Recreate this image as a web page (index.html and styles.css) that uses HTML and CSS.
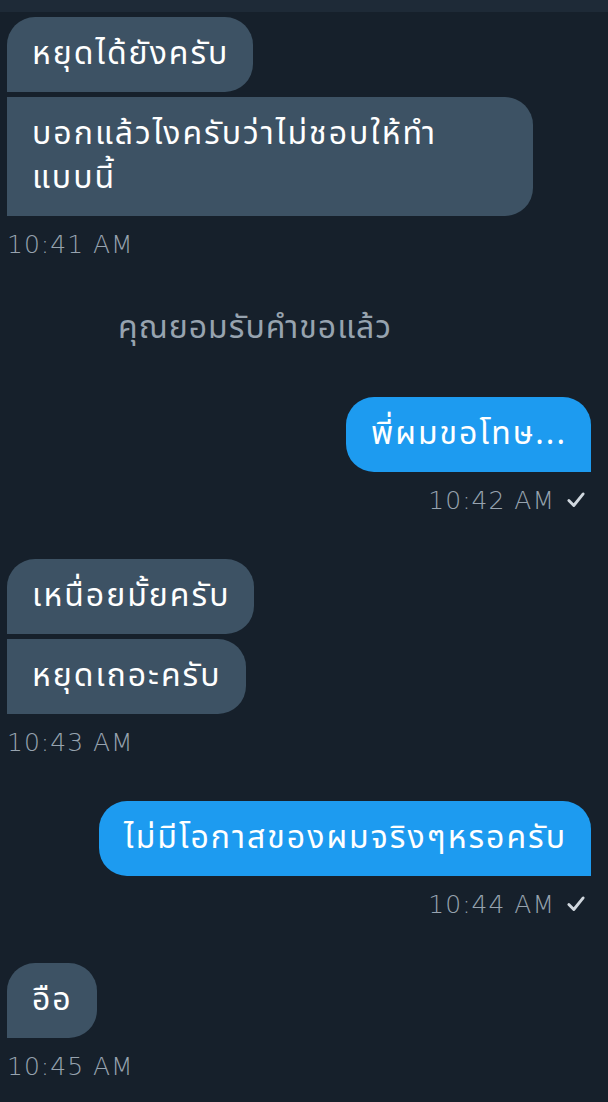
FILE: index.html
```html
<!DOCTYPE html>
<html>
    <head>
        <meta charset="utf-8">
        <meta name="viewport" content="width=device-width,initial-scale=1.0">
        <title>Messages</title>
        <link rel="stylesheet" href="styles.css">
    </head>
    <body>
        <div class="topBar"></div>
        <div class="chat">
            <div class="group">
                <div class="bubble in first">หยุดได้ยังครับ</div>
                <div class="bubble in wide">บอกแล้วไงครับว่าไม่ชอบให้ทำ<br>แบบนี้</div>
                <div class="time">10:41 AM</div>
            </div>

            <div class="system">คุณยอมรับคำขอแล้ว</div>

            <div class="group out">
                <div class="bubble sent">พี่ผมขอโทษ...</div>
                <div class="time">10:42 AM
                    <svg class="check" viewBox="0 0 20 20"><path d="M3.5 10.5 L8 15 L16.5 4.5" /></svg>
                </div>
            </div>

            <div class="group">
                <div class="bubble in first">เหนื่อยมั้ยครับ</div>
                <div class="bubble in">หยุดเถอะครับ</div>
                <div class="time">10:43 AM</div>
            </div>

            <div class="group out">
                <div class="bubble sent">ไม่มีโอกาสของผมจริงๆหรอครับ</div>
                <div class="time">10:44 AM
                    <svg class="check" viewBox="0 0 20 20"><path d="M3.5 10.5 L8 15 L16.5 4.5" /></svg>
                </div>
            </div>

            <div class="group">
                <div class="bubble in first">อือ</div>
                <div class="time">10:45 AM</div>
            </div>
        </div>
    </body>
</html>
```

FILE: styles.css
```css
html, body {
    margin: 0;
    padding: 0;
    background-color: #16202b;
    font-family: "Noto Sans Thai", "Noto Sans", "DejaVu Sans", sans-serif;
    color: #fff;
}

.topBar {
    height: 12px;
    background-color: #1e2a37;
}

.chat {
    display: flex;
    flex-direction: column;
    gap: 44px;
    padding: 5px 17px 0 7px;
}

.group {
    display: flex;
    flex-direction: column;
    align-items: flex-start;
    gap: 5px;
}

.group.out {
    align-items: flex-end;
}

.bubble {
    box-sizing: border-box;
    padding: 15px 24px 16px 25px;
    max-width: 526px;
    font-size: 32px;
    line-height: 44px;
    letter-spacing: 2px;
    border-radius: 28px;
}

.bubble.in {
    background-color: #3d5264;
    border-top-left-radius: 0;
    border-bottom-left-radius: 0;
}

.bubble.in.first {
    border-top-left-radius: 28px;
}

.bubble.wide {
    width: 526px;
}

.bubble.sent {
    background-color: #1d9bf0;
    border-bottom-right-radius: 0;
}

.time {
    display: flex;
    align-items: center;
    gap: 10px;
    margin-top: 8px;
    height: 30px;
    font-family: "DejaVu Sans", sans-serif;
    font-weight: 200;
    font-size: 25px;
    letter-spacing: 1px;
    color: #97a3af;
}

.check {
    width: 22px;
    height: 22px;
    margin-right: 4px;
    fill: none;
    stroke: #d0d7de;
    stroke-width: 2.6;
    stroke-linecap: round;
    stroke-linejoin: round;
}

.system {
    padding-left: 111px;
    font-size: 32px;
    line-height: 50px;
    letter-spacing: 1px;
    color: #97a3af;
}
```
